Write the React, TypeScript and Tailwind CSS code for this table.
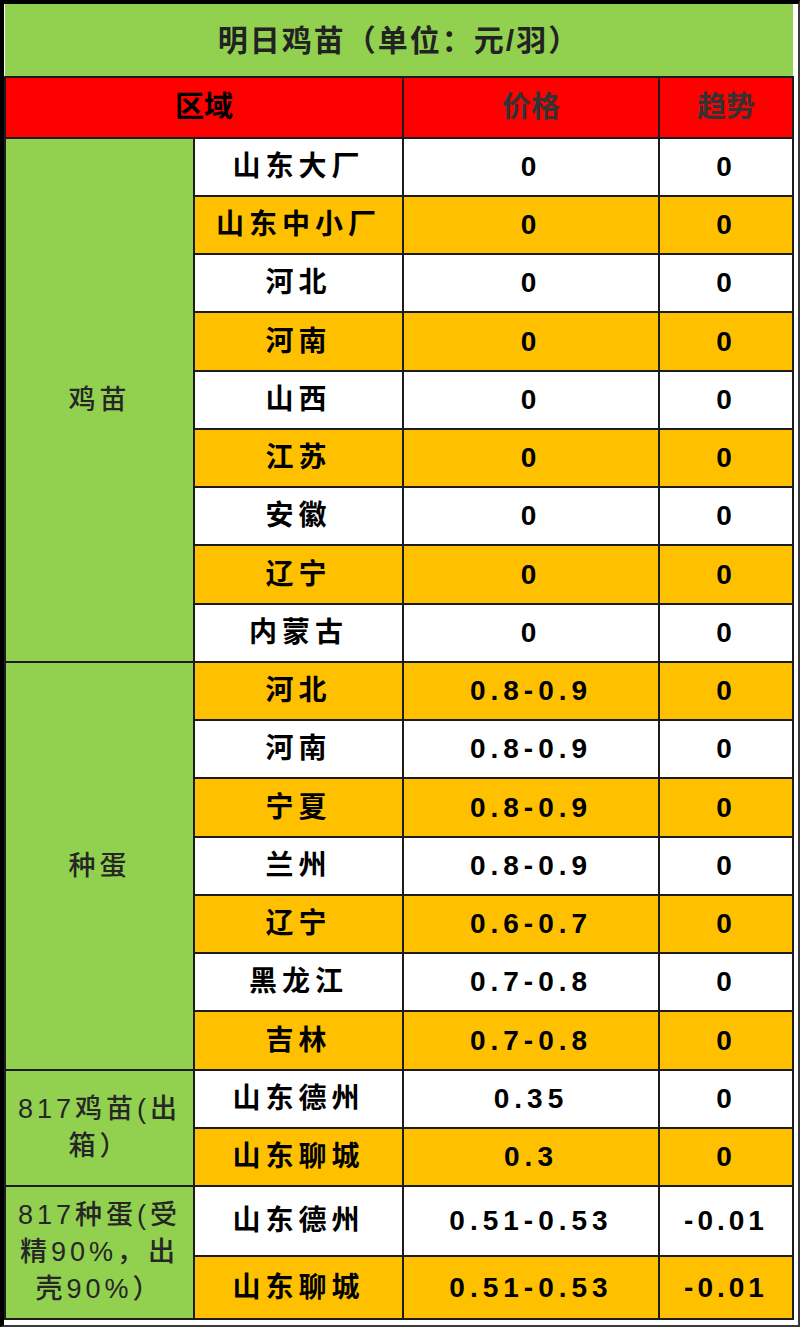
import React from "react";

type Row = { area: string; price: string; trend: string };

const groups: { label: React.ReactNode; rows: Row[]; tall?: boolean }[] = [
  {
    label: "鸡苗",
    rows: [
      { area: "山东大厂", price: "0", trend: "0" },
      { area: "山东中小厂", price: "0", trend: "0" },
      { area: "河北", price: "0", trend: "0" },
      { area: "河南", price: "0", trend: "0" },
      { area: "山西", price: "0", trend: "0" },
      { area: "江苏", price: "0", trend: "0" },
      { area: "安徽", price: "0", trend: "0" },
      { area: "辽宁", price: "0", trend: "0" },
      { area: "内蒙古", price: "0", trend: "0" },
    ],
  },
  {
    label: "种蛋",
    rows: [
      { area: "河北", price: "0.8-0.9", trend: "0" },
      { area: "河南", price: "0.8-0.9", trend: "0" },
      { area: "宁夏", price: "0.8-0.9", trend: "0" },
      { area: "兰州", price: "0.8-0.9", trend: "0" },
      { area: "辽宁", price: "0.6-0.7", trend: "0" },
      { area: "黑龙江", price: "0.7-0.8", trend: "0" },
      { area: "吉林", price: "0.7-0.8", trend: "0" },
    ],
  },
  {
    label: (
      <>
        817鸡苗(出
        <br />
        箱）
      </>
    ),
    rows: [
      { area: "山东德州", price: "0.35", trend: "0" },
      { area: "山东聊城", price: "0.3", trend: "0" },
    ],
  },
  {
    label: (
      <>
        817种蛋(受
        <br />
        精90%，出
        <br />
        壳90%）
      </>
    ),
    rows: [
      { area: "山东德州", price: "0.51-0.53", trend: "-0.01" },
      { area: "山东聊城", price: "0.51-0.53", trend: "-0.01" },
    ],
    tall: true,
  },
];

const cell = "border-2 border-[#1c1c1c] text-center align-middle p-0";

export default function App() {
  let idx = 0;
  return (
    <div
      className="w-[800px] h-[1327px] bg-white border-t-[4px] border-l-[4px] border-black border-r-[2px] border-b-[2px] border-r-[#3a3a3a] border-b-[#3a3a3a] pr-[6px] pb-[6px]"
      style={{ fontFamily: '"Liberation Sans", "Noto Sans CJK SC", sans-serif' }}
    >
      <table className="w-[788px] table-fixed border-collapse">
        <colgroup>
          <col className="w-[189px]" />
          <col className="w-[209px]" />
          <col className="w-[256px]" />
          <col className="w-[134px]" />
        </colgroup>
        <tbody>
          <tr className="h-[73px] bg-[#92d050]">
            <td colSpan={4} className="border-b-2 border-[#1c1c1c] text-center align-middle text-[30px] font-bold text-[#222] tracking-[2px]">
              明日鸡苗（单位：元/羽）
            </td>
          </tr>
          <tr className="h-[61px] bg-[#ff0000] text-[29px] font-bold">
            <td colSpan={2} className={`${cell} text-black`}>区域</td>
            <td className={`${cell} text-[#333]`}>价格</td>
            <td className={`${cell} text-[#333]`}>趋势</td>
          </tr>
          {groups.map((g, gi) =>
            g.rows.map((r, ri) => {
              const orange = idx % 2 === 1;
              idx++;
              const h = g.tall ? (ri === 0 ? "h-[70px]" : "h-[63px]") : idx % 4 === 0 ? "h-[59px]" : "h-[58px]";
              return (
                <tr key={`${gi}-${ri}`} className={`${h} ${orange ? "bg-[#ffc000]" : "bg-white"}`}>
                  {ri === 0 && (
                    <td
                      rowSpan={g.rows.length}
                      className={`${cell} bg-[#92d050] text-[#262626] text-[27px] font-medium leading-[37px] tracking-[4px]`}
                    >
                      {g.label}
                    </td>
                  )}
                  <td className={`${cell} text-[28px] font-bold text-black tracking-[5px]`}>{r.area}</td>
                  <td className={`${cell} text-[28px] font-bold text-black tracking-[5px]`}>{r.price}</td>
                  <td className={`${cell} text-[28px] font-bold text-black tracking-[4px]`}>{r.trend}</td>
                </tr>
              );
            })
          )}
        </tbody>
      </table>
    </div>
  );
}
